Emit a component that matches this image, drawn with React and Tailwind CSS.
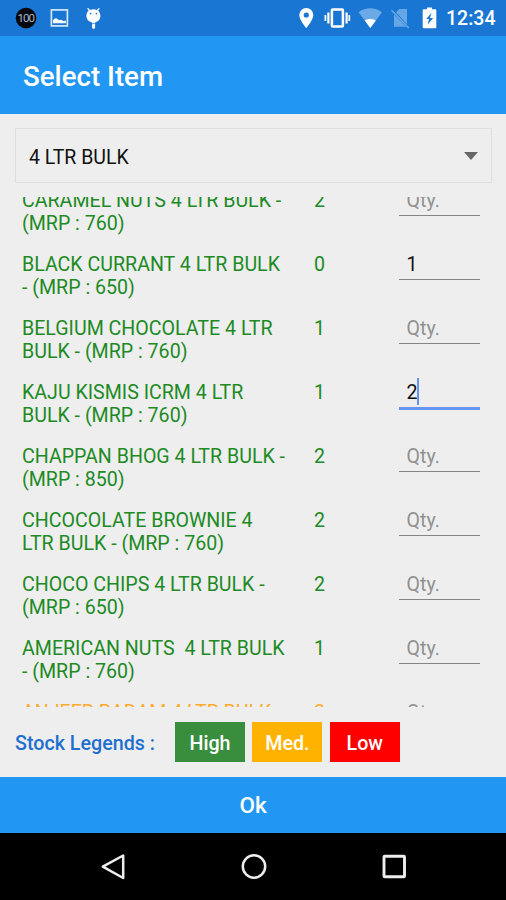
const ITEMS = [
  { id: 1, lines: ["CARAMEL NUTS 4 LTR BULK -", "(MRP : 760)"], stock: 2, level: "high" },
  { id: 2, lines: ["BLACK CURRANT 4 LTR BULK", "- (MRP : 650)"], stock: 0, level: "high", qty: "1" },
  { id: 3, lines: ["BELGIUM CHOCOLATE 4 LTR", "BULK - (MRP : 760)"], stock: 1, level: "high" },
  { id: 4, lines: ["KAJU KISMIS ICRM 4 LTR", "BULK - (MRP : 760)"], stock: 1, level: "high", qty: "2", focused: true },
  { id: 5, lines: ["CHAPPAN BHOG 4 LTR BULK -", "(MRP : 850)"], stock: 2, level: "high" },
  { id: 6, lines: ["CHCOCOLATE BROWNIE 4", "LTR BULK - (MRP : 760)"], stock: 2, level: "high" },
  { id: 7, lines: ["CHOCO CHIPS 4 LTR BULK -", "(MRP : 650)"], stock: 2, level: "high" },
  { id: 8, lines: ["AMERICAN NUTS  4 LTR BULK", "- (MRP : 760)"], stock: 1, level: "high" },
  { id: 9, lines: ["ANJEER BADAM 4 LTR BULK"], stock: 2, level: "med" },
];

const LEVEL_COLORS = {
  high: "text-[#208a24]",
  med: "text-[#ffab2e]",
};

const LEGENDS = [
  { label: "High", className: "bg-[#388e3c]" },
  { label: "Med.", className: "bg-[#ffb300]" },
  { label: "Low", className: "bg-[#ff0000]" },
];

function StatusBar() {
  return (
    <div className="flex h-[35.5px] items-start bg-[#1976d2] text-white">
      <svg className="ml-[15px] h-9 w-[22px]" viewBox="15 0 22 36">
        <circle cx="26" cy="18" r="10.3" fill="#05070c" />
        <text x="25.8" y="22.2" textAnchor="middle" fontSize="11.5" letterSpacing="-0.9" fill="#a9b4c6" fontFamily="Roboto, sans-serif">
          100
        </text>
      </svg>
      <svg className="ml-[13px] h-9 w-[19px]" viewBox="50 0 19 36">
        <rect x="51.4" y="9.9" width="16" height="16" fill="none" stroke="#d5e8fa" strokeWidth="1.7" />
        <path d="M53 23.2v-2.9q2.3-3.4 4.6-1.3l1.2 1.2q2-1.2 3.7.2 1.8 1 3.300.2v2.600z" fill="currentColor" />
      </svg>
      <svg className="ml-4 h-9 w-[18px]" viewBox="85 0 18 36">
        <path d="M88 8.6l2 2.8M98.9 8.6l-2 2.8" stroke="currentColor" strokeWidth="1.3" strokeLinecap="round" />
        <path d="M93.4 9.3c4.2 0 7 2.8 7 6.5 0 3.5-2.3 6-5.3 6.6v5.1c0 1.8-3 1.8-3 0v-5.1c-3.3-.6-5.7-3.1-5.7-6.6 0-3.7 2.8-6.5 7-6.5z" fill="currentColor" />
        <circle cx="90.6" cy="13.6" r=".9" fill="#1976d2" />
        <circle cx="96.4" cy="13.6" r=".9" fill="#1976d2" />
        <path d="M92 23.6h3.2" stroke="#1976d2" strokeWidth=".7" />
      </svg>

      <svg className="ml-auto h-9 w-4" viewBox="298 0 16 36">
        <path
          fillRule="evenodd"
          d="M306.3 8a7 7 0 0 0-7 7c0 5 7 13 7 13s7-8 7-13a7 7 0 0 0-7-7zm0 4.4a2.6 2.6 0 1 1 0 5.2 2.6 2.6 0 0 1 0-5.2z"
          fill="currentColor"
        />
      </svg>
      <svg className="ml-2.5 h-9 w-7" viewBox="324 0 28 36">
        <rect x="331.9" y="9.4" width="11" height="17.2" rx=".8" fill="none" stroke="currentColor" strokeWidth="2.5" />
        <path d="M328.4 12.5v11M346.6 12.5v11" stroke="currentColor" strokeWidth="2.2" />
        <path d="M325.4 15v6M349.3 15v6" stroke="currentColor" strokeWidth="1.8" />
      </svg>
      <svg className="ml-1.5 h-9 w-6" viewBox="358 0 24 36">
        <path d="M358.5 12.3c7-5.5 16.5-5.5 23.5 0L370.3 28z" fill="#6baae7" />
        <path d="M364.8 20.5c3.3-2 7.7-2 11 0L370.3 28z" fill="currentColor" />
      </svg>
      <svg className="ml-2 h-9 w-5" viewBox="390 0 20 36">
        <path d="M399.2 9h7.8v15.200L396 12.600zM394 14.500l12.300 12.300H394z" fill="#64a6e6" />
        <path d="M391.500 10.300L408.800 28" stroke="#6baae7" strokeWidth="1.500" />
      </svg>
      <svg className="ml-3 h-9 w-[15px]" viewBox="422 0 15 36">
        <path
          fillRule="evenodd"
          d="M427 7.500h5v1.800h3.300q1 0 1 1v17q0 1-1 1h-11.600q-1 0-1-1v-17q0-1 1-1h3.300zM431.500 12.800l-5.300 6.200h2.900l-1.500 5.700 5.600-6.800h-3.200z"
          fill="currentColor"
        />
      </svg>
      <span className="ml-[9px] w-[60px] text-[19.5px] leading-[38px] font-medium whitespace-nowrap">12:34</span>
    </div>
  );
}

function QtyField({ value, focused }) {
  return (
    <div
      className={
        focused
          ? "relative h-[29px] w-[81.5px] border-b-3 border-[#6694f0]"
          : "relative h-[27px] w-[81.5px] border-b border-[#858585]"
      }
    >
      <div className="flex h-[23px] pl-2">
        {value ? (
          <span className="text-[#111]">{value}</span>
        ) : (
          <span className="text-[#929292]">Qty.</span>
        )}
      </div>
      {focused && <span className="absolute top-[-3px] left-[18.5px] h-[27px] w-[2px] bg-[#6694f0]" />}
    </div>
  );
}

function ItemRow({ item }) {
  return (
    <div className={`flex h-16 items-start pl-[22px] ${LEVEL_COLORS[item.level]}`}>
      <div className="w-[292px] whitespace-pre">
        {item.lines.map((line) => (
          <div key={line}>{line}</div>
        ))}
      </div>
      <div className="w-[84.5px]">{item.stock}</div>
      <QtyField value={item.qty} focused={item.focused} />
    </div>
  );
}

function NavBar() {
  return (
    <div className="flex h-[67px] items-center justify-center gap-[112px] bg-black pl-px">
      <svg className="h-7 w-7" viewBox="0 0 28 28" fill="none" stroke="#eee" strokeWidth="2.5" strokeLinejoin="round">
        <path d="M23.2 2.5v22.5L2.8 13.7z" />
      </svg>
      <svg className="h-7 w-7" viewBox="0 0 28 28" fill="none" stroke="#eee" strokeWidth="2.5">
        <circle cx="14" cy="13.5" r="11.2" />
      </svg>
      <svg className="h-7 w-7" viewBox="0 0 28 28" fill="none" stroke="#eee" strokeWidth="2.9">
        <rect x="4" y="3.2" width="20.5" height="20.5" rx=".8" />
      </svg>
    </div>
  );
}

export default function App() {
  return (
    <div className="flex h-[900px] w-[506px] flex-col overflow-hidden bg-[#eeeeee] font-['Roboto',sans-serif]">
      <StatusBar />
      <header className="flex h-[78.5px] items-center bg-[#2196f3] pt-1 pl-[23px] text-[27.7px] font-medium text-white">
        Select Item
      </header>

      <div className="mr-[14px] ml-[15px] mt-[14px] flex h-[55px] items-center justify-between border border-[#dde0dd] pt-[5px] pr-[13px] pl-[13px] text-[19.5px] text-[#111]">
        <span>4 LTR BULK</span>
        <svg className="mb-[5px] h-2 w-[14px]" viewBox="0 0 14 8">
          <path d="M0 0h14L7 8z" fill="#666" />
        </svg>
      </div>

      <div className="mt-[14px] h-[510px] overflow-hidden text-[19.6px] leading-[23px]">
        <div className="-mt-[8px]">
          {ITEMS.map((item) => (
            <ItemRow key={item.id} item={item} />
          ))}
        </div>
      </div>

      <div className="flex h-[70px] items-start pt-[15px] pl-[15px]">
        <div className="w-[160px] text-[19.7px] leading-[43px] font-medium text-[#1f6fd0]">Stock Legends :</div>
        <div className="flex gap-[7.4px]">
          {LEGENDS.map((legend) => (
            <div
              key={legend.label}
              className={`h-10 w-[70px] text-center text-[19.7px] leading-[43px] font-medium text-white ${legend.className}`}
            >
              {legend.label}
            </div>
          ))}
        </div>
      </div>

      <button className="h-[56px] bg-[#2196f3] pt-0.5 text-[22.5px] font-medium text-white">Ok</button>
      <NavBar />
    </div>
  );
}
